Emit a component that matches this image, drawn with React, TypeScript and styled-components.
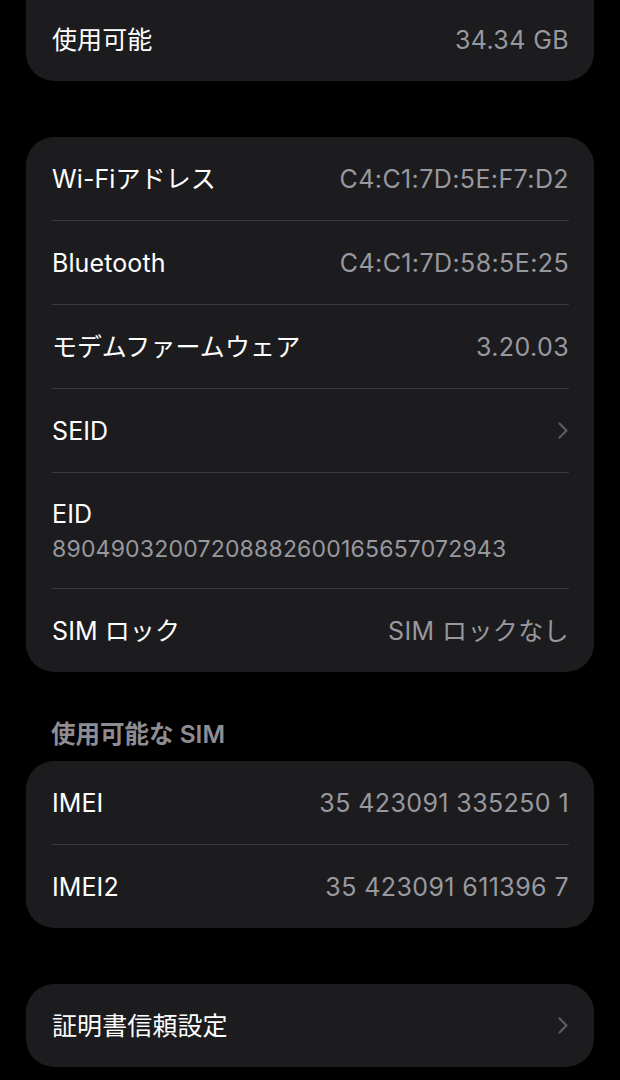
import React from "react";
import styled, { createGlobalStyle } from "styled-components";

const GlobalStyle = createGlobalStyle`
  html, body {
    margin: 0;
    padding: 0;
    background: #000000;
  }
  body {
    font-family: "Inter", "Noto Sans CJK JP", sans-serif;
    -webkit-font-smoothing: antialiased;
  }
`;

type RowItem = {
  label: string;
  value?: string;
  sub?: string;
  chevron?: boolean;
};

// top group is scrolled partly out of view
const capacityRows: RowItem[] = [{ label: "使用可能", value: "34.34 GB" }];

const networkRows: RowItem[] = [
  { label: "Wi-Fiアドレス", value: "C4:C1:7D:5E:F7:D2" },
  { label: "Bluetooth", value: "C4:C1:7D:58:5E:25" },
  { label: "モデムファームウェア", value: "3.20.03" },
  { label: "SEID", chevron: true },
  { label: "EID", sub: "89049032007208882600165657072943" },
  { label: "SIM ロック", value: "SIM ロックなし" },
];

const simRows: RowItem[] = [
  { label: "IMEI", value: "35 423091 335250 1" },
  { label: "IMEI2", value: "35 423091 611396 7" },
];

const certRows: RowItem[] = [{ label: "証明書信頼設定", chevron: true }];

const Chevron = () => (
  <ChevronIcon width="10" height="17" viewBox="0 0 10 17" fill="none">
    <path
      d="M1.5 1.5L8.5 8.5L1.5 15.5"
      stroke="currentColor"
      strokeWidth="2.2"
      strokeLinecap="round"
      strokeLinejoin="round"
    />
  </ChevronIcon>
);

const Group = ({ rows, $scrolled }: { rows: RowItem[]; $scrolled?: boolean }) => (
  <Card $scrolled={$scrolled}>
    {rows.map((row) =>
      row.sub ? (
        <StackRow key={row.label}>
          <Label>{row.label}</Label>
          <SubValue>{row.sub}</SubValue>
        </StackRow>
      ) : (
        <Row key={row.label}>
          <Label>{row.label}</Label>
          {row.value && <Value>{row.value}</Value>}
          {row.chevron && <Chevron />}
        </Row>
      ),
    )}
  </Card>
);

export default function App() {
  return (
    <>
      <GlobalStyle />
      <Page>
        <Group rows={capacityRows} $scrolled />
        <Group rows={networkRows} />
        <SectionHeader>使用可能な SIM</SectionHeader>
        <Group rows={simRows} />
        <Group rows={certRows} />
      </Page>
    </>
  );
}

const Page = styled.div`
  display: flex;
  flex-direction: column;
  margin-top: -32px;
  padding-bottom: 40px;

  & > div + div {
    margin-top: 56px;
  }

  & > h3 + div {
    margin-top: 0 !important;
  }
`;

const Card = styled.div<{ $scrolled?: boolean }>`
  margin: 0 26px;
  padding: ${(p) => (p.$scrolled ? "30px" : "0")} 25px 0 26px;
  background: #1c1c1e;
  border-radius: 28px;
  display: flex;
  flex-direction: column;
`;

const Row = styled.div`
  display: flex;
  align-items: center;
  justify-content: space-between;
  min-height: 83px;
  gap: 16px;

  & + & {
    border-top: 1px solid #38383a;
  }
`;

const StackRow = styled.div`
  display: flex;
  flex-direction: column;
  justify-content: center;
  min-height: 115px;
  gap: 6px;
  border-top: 1px solid #38383a;

  & + ${Row} {
    border-top: 1px solid #38383a;
  }
`;

const Label = styled.span`
  color: #ffffff;
  font-size: 25px;
  line-height: 30px;
  letter-spacing: 0.1px;
  white-space: nowrap;
`;

const Value = styled.span`
  color: #98989f;
  font-size: 25px;
  line-height: 30px;
  letter-spacing: 0.4px;
  white-space: nowrap;
  text-align: right;
`;

const SubValue = styled.span`
  color: #98989f;
  font-size: 23px;
  line-height: 28px;
  letter-spacing: 0.2px;
`;

const ChevronIcon = styled.svg`
  color: #5b5b60;
  flex-shrink: 0;
  margin-right: 1px;
`;

const SectionHeader = styled.h3`
  margin: 47px 0 12px;
  padding: 0 51px;
  color: #8d8d93;
  font-size: 24.5px;
  line-height: 30px;
  font-weight: 600;
`;
